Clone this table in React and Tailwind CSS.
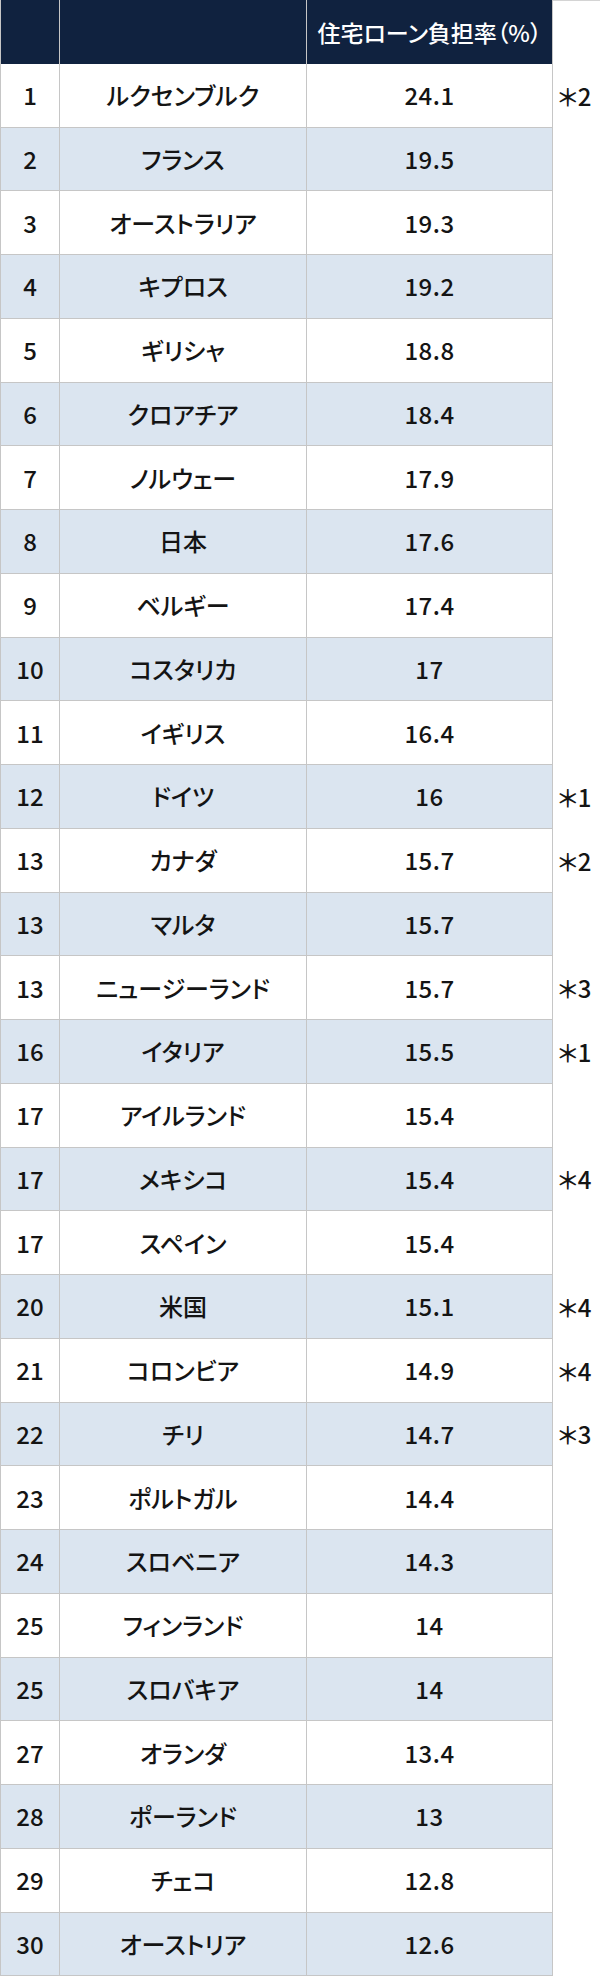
import React from "react";

// Ranking rows: rank, country, rate, footnote
const rows = [
  ["1", "ルクセンブルク", "24.1", "＊2"],
  ["2", "フランス", "19.5", ""],
  ["3", "オーストラリア", "19.3", ""],
  ["4", "キプロス", "19.2", ""],
  ["5", "ギリシャ", "18.8", ""],
  ["6", "クロアチア", "18.4", ""],
  ["7", "ノルウェー", "17.9", ""],
  ["8", "日本", "17.6", ""],
  ["9", "ベルギー", "17.4", ""],
  ["10", "コスタリカ", "17", ""],
  ["11", "イギリス", "16.4", ""],
  ["12", "ドイツ", "16", "＊1"],
  ["13", "カナダ", "15.7", "＊2"],
  ["13", "マルタ", "15.7", ""],
  ["13", "ニュージーランド", "15.7", "＊3"],
  ["16", "イタリア", "15.5", "＊1"],
  ["17", "アイルランド", "15.4", ""],
  ["17", "メキシコ", "15.4", "＊4"],
  ["17", "スペイン", "15.4", ""],
  ["20", "米国", "15.1", "＊4"],
  ["21", "コロンビア", "14.9", "＊4"],
  ["22", "チリ", "14.7", "＊3"],
  ["23", "ポルトガル", "14.4", ""],
  ["24", "スロベニア", "14.3", ""],
  ["25", "フィンランド", "14", ""],
  ["25", "スロバキア", "14", ""],
  ["27", "オランダ", "13.4", ""],
  ["28", "ポーランド", "13", ""],
  ["29", "チェコ", "12.8", ""],
  ["30", "オーストリア", "12.6", ""],
];

const font = { fontFamily: '"Noto Sans CJK JP", "Noto Sans", sans-serif' };

export default function App() {
  return (
    <div className="w-[600px] bg-white text-[#141414] [font-feature-settings:'palt']" style={font}>
      {/* header */}
      <div className="grid grid-cols-[60px_247px_246px_47px] h-[63.75px]">
        <div className="bg-[#10223f] border-l border-r border-[#c6c6c6]" />
        <div className="bg-[#10223f] border-r border-[#c6c6c6]" />
        <div className="bg-[#10223f] border-r border-[#c6c6c6] flex items-center justify-center text-white text-[23px] font-medium">
          住宅ローン負担率（%）
        </div>
        <div className="border-t border-[#d4d4d4]" />
      </div>

      {/* body */}
      {rows.map(([rank, name, rate, note], i) => {
        const stripe = i % 2 === 1 ? "bg-[#dbe5f0]" : "bg-white";
        return (
          <div key={i} className="grid grid-cols-[60px_247px_246px_47px] h-[63.75px] text-[24px] font-medium">
            <div className={`${stripe} border-l border-r border-b border-[#c6c6c6] flex items-center justify-center`}>
              {rank}
            </div>
            <div className={`${stripe} border-r border-b border-[#c6c6c6] flex items-center justify-center`}>
              {name}
            </div>
            <div className={`${stripe} border-r border-b border-[#c6c6c6] flex items-center justify-center tracking-[0.5px]`}>
              {rate}
            </div>
            <div className="flex items-center pl-[5px] whitespace-nowrap">{note}</div>
          </div>
        );
      })}
    </div>
  );
}
